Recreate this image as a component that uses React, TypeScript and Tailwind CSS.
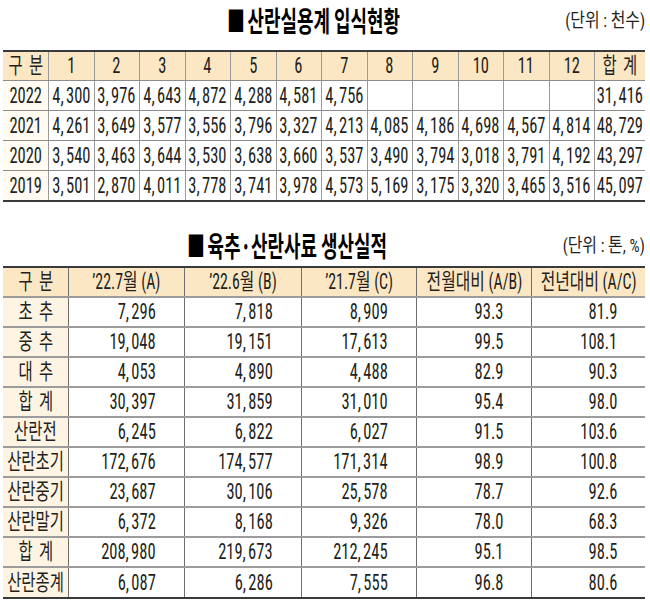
import { Fragment } from "react";

const INK = "text-[#231f20]";

const t1Head = ["1", "2", "3", "4", "5", "6", "7", "8", "9", "10", "11", "12"];
const t1Rows: [string, string[]][] = [
  ["2022", ["4,300", "3,976", "4,643", "4,872", "4,288", "4,581", "4,756", "", "", "", "", "", "31,416"]],
  ["2021", ["4,261", "3,649", "3,577", "3,556", "3,796", "3,327", "4,213", "4,085", "4,186", "4,698", "4,567", "4,814", "48,729"]],
  ["2020", ["3,540", "3,463", "3,644", "3,530", "3,638", "3,660", "3,537", "3,490", "3,794", "3,018", "3,791", "4,192", "43,297"]],
  ["2019", ["3,501", "2,870", "4,011", "3,778", "3,741", "3,978", "4,573", "5,169", "3,175", "3,320", "3,465", "3,516", "45,097"]],
];

const t2Head = ["’22.7월 (A)", "’22.6월 (B)", "’21.7월 (C)", "전월대비 (A/B)", "전년대비 (A/C)"];
const t2Rows: [string, string[]][] = [
  ["초추", ["7,296", "7,818", "8,909", "93.3", "81.9"]],
  ["중추", ["19,048", "19,151", "17,613", "99.5", "108.1"]],
  ["대추", ["4,053", "4,890", "4,488", "82.9", "90.3"]],
  ["합계", ["30,397", "31,859", "31,010", "95.4", "98.0"]],
  ["산란전", ["6,245", "6,822", "6,027", "91.5", "103.6"]],
  ["산란초기", ["172,676", "174,577", "171,314", "98.9", "100.8"]],
  ["산란중기", ["23,687", "30,106", "25,578", "78.7", "92.6"]],
  ["산란말기", ["6,372", "8,168", "9,326", "78.0", "68.3"]],
  ["합계", ["208,980", "219,673", "212,245", "95.1", "98.5"]],
  ["산란종계", ["6,087", "6,286", "7,555", "96.8", "80.6"]],
];

function Num({ v, right }: { v: string; right?: boolean }) {
  const parts = v.split(",");
  return (
    <span
      className={`inline-block whitespace-nowrap text-[22px] leading-none scale-x-75 ${right ? "origin-right" : "origin-center"}`}
    >
      {parts.map((p, i) => (
        <Fragment key={i}>
          {i > 0 && <span className="mr-[3px]">,</span>}
          {p}
        </Fragment>
      ))}
    </span>
  );
}

function Label({ v }: { v: string }) {
  const chars = Array.from(v);
  return (
    <span className="inline-block whitespace-nowrap text-[22px] leading-none scale-x-[0.7] origin-center">
      {chars.length === 2 ? (
        <>
          <span className="mr-[9px]">{chars[0]}</span>
          {chars[1]}
        </>
      ) : (
        v
      )}
    </span>
  );
}

function Head({ v }: { v: string }) {
  return (
    <span className="inline-block whitespace-nowrap text-[22px] leading-none scale-x-[0.72] origin-center">
      {v}
    </span>
  );
}

function Title({ text, unit, pad }: { text: string; unit: string; pad: string }) {
  return (
    <div className={`flex items-center h-[41px] ${pad} pr-[5px]`}>
      <span className="shrink-0 mr-[-120px] inline-block whitespace-nowrap origin-left scale-x-[0.64] text-[28px] font-bold leading-[41px] text-black [font-family:'Noto_Sans_CJK_KR',sans-serif]">
        <span className="mr-[4px]">■</span>
        {text}
      </span>
      <span className={`shrink-0 ml-auto inline-block whitespace-nowrap origin-right scale-x-[0.84] text-[19px] leading-[28px] ${INK}`}>
        {unit}
      </span>
    </div>
  );
}

const G1 = "grid grid-cols-[46px_repeat(12,45.5px)_50px]";
const G2 = "grid grid-cols-[66px_116px_117px_115px_115px_113px]";

export default function App() {
  return (
    <div className={`w-[650px] h-[602px] bg-white overflow-hidden ${INK} [font-family:'Roboto_Condensed','Noto_Sans_CJK_KR',sans-serif]`}>
      {/* Table 1 */}
      <Title text="산란실용계 입식현황" unit="(단위 : 천수)" pad="pl-[227px]" />
      <div className="mt-[9px] ml-[3px] w-[642px] border-t-2 border-b-2 border-[#3a3a3a]">
        <div className={`${G1} h-[29px] bg-[#fbe7c4] border-b border-[#8c8c8c]`}>
          <div className="flex items-center justify-center border-r border-[#9a9a9a]">
            <Label v="구분" />
          </div>
          {t1Head.map((h) => (
            <div key={h} className="flex items-center justify-center border-r border-[#9a9a9a]">
              <Num v={h} />
            </div>
          ))}
          <div className="flex items-center justify-center">
            <Label v="합계" />
          </div>
        </div>
        {t1Rows.map(([y, vals], ri) => (
          <div
            key={y}
            className={`${G1} ${ri === t1Rows.length - 1 ? "h-[29px]" : "h-[30px] border-b border-[#8c8c8c]"}`}
          >
            <div className="flex items-center justify-center border-r border-[#9a9a9a] bg-[#fffaf2]">
              <Num v={y} />
            </div>
            {vals.map((v, i) => (
              <div
                key={i}
                className={`flex items-center justify-center ${i < vals.length - 1 ? "border-r border-[#9a9a9a]" : ""}`}
              >
                {v && <Num v={v} />}
              </div>
            ))}
          </div>
        ))}
      </div>

      {/* Table 2 */}
      <div className="mt-[23px]">
        <Title text="육추·산란사료 생산실적" unit="(단위 : 톤, %)" pad="pl-[187px]" />
      </div>
      <div className="ml-[3px] w-[642px] border-t-2 border-b-2 border-[#3a3a3a]">
        <div className={`${G2} h-[30px] bg-[#fbe7c4] border-b-2 border-[#9c9c9c]`}>
          <div className="flex items-center justify-center border-r border-[#6e6e6e]">
            <Label v="구분" />
          </div>
          {t2Head.map((h, i) => (
            <div
              key={h}
              className={`flex items-center justify-center ${i < t2Head.length - 1 ? "border-r border-[#6e6e6e]" : ""}`}
            >
              <Head v={h} />
            </div>
          ))}
        </div>
        {t2Rows.map(([label, vals], ri) => (
          <div
            key={ri}
            className={`${G2} ${ri === t2Rows.length - 1 ? "h-[29px]" : "h-[30px] border-b-2 border-[#9c9c9c]"}`}
          >
            <div className="flex items-center justify-center border-r border-[#6e6e6e] bg-[#fdf4e3]">
              <Label v={label} />
            </div>
            {vals.map((v, i) => (
              <div
                key={i}
                className={`flex items-center justify-end pr-[28px] ${i < vals.length - 1 ? "border-r border-[#6e6e6e]" : ""}`}
              >
                <Num v={v} right />
              </div>
            ))}
          </div>
        ))}
      </div>
    </div>
  );
}
